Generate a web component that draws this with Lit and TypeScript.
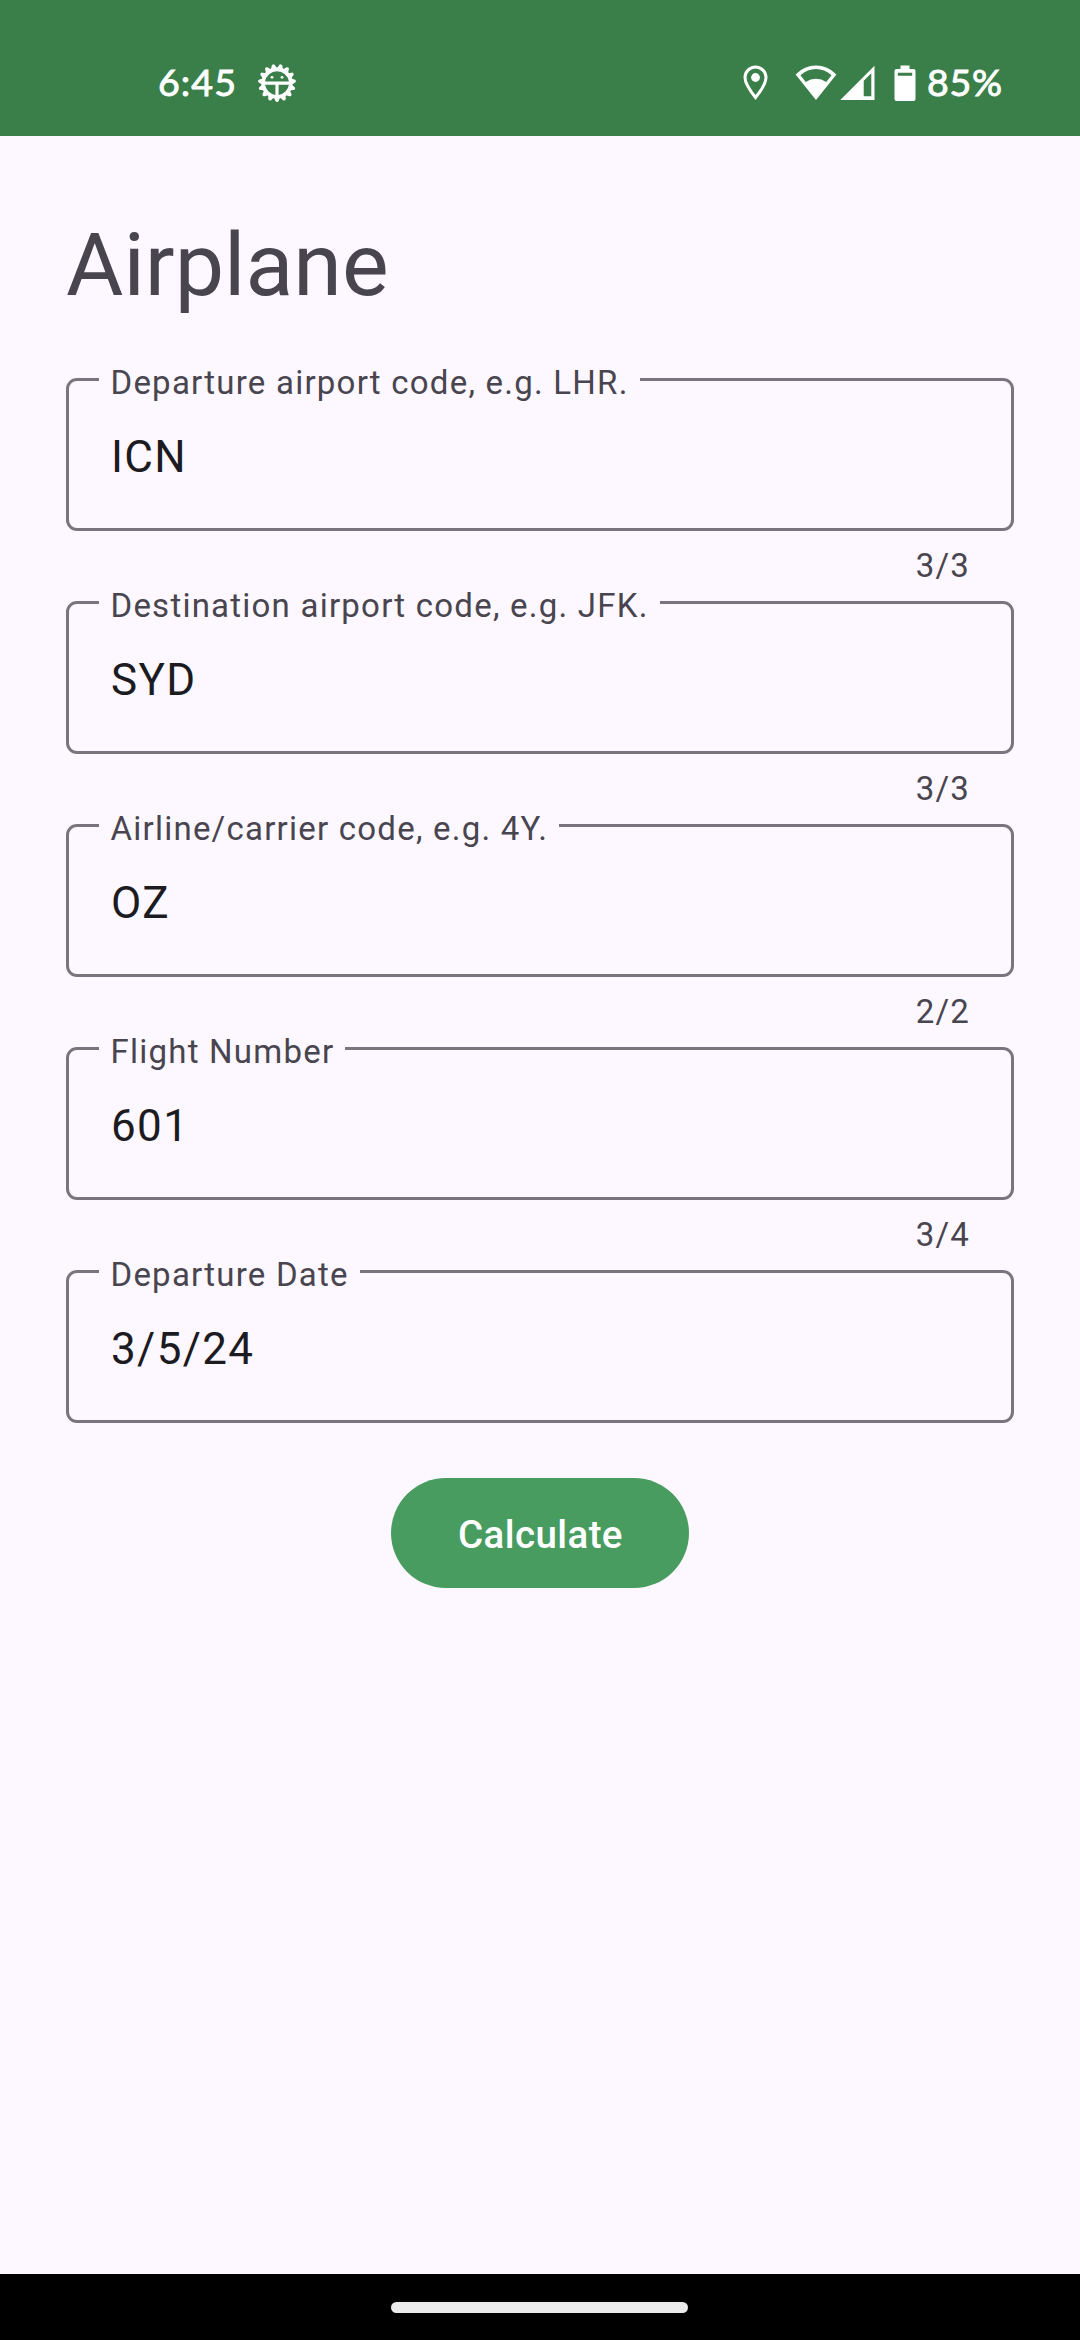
import { LitElement, html, css, svg, nothing } from "lit";
import { customElement, property } from "lit/decorators.js";

const TEETH = Array.from({ length: 15 }, (_, i) => i * 24);

@customElement("status-bar")
class StatusBar extends LitElement {
  static styles = css`
    :host {
      display: flex;
      box-sizing: border-box;
      width: 100%;
      height: 136px;
      padding: 60px 77px 30px 158px;
      align-items: center;
      justify-content: space-between;
      background: #3a7f49;
      color: #fff;
    }
    .group { display: flex; align-items: center; height: 46px; }
    .text {
      padding-bottom: 2px;
      font-family: Lato, "Noto Sans", sans-serif;
      font-size: 37.5px;
      line-height: 46px;
      font-weight: 400;
      letter-spacing: 0.7px;
      -webkit-text-stroke: 0.9px #fff;
      white-space: pre;
    }
    svg { display: block; flex: none; fill: #fff; }
    .time { width: 80px; letter-spacing: 1.1px; }
    .gear { margin-left: 18.5px; }
    .wifi { margin-left: 27px; }
    .signal { margin-left: 3px; }
    .battery { margin-left: 19px; }
    .percent { width: 76px; margin-left: 11px; }
  `;
  render() {
    return html`
      <div class="group">
        <span class="text time">6:45</span>
        <svg class="gear" width="40" height="40" viewBox="-20 -20 40 40">
          ${TEETH.map((a) => svg`<path transform="rotate(${a})" d="M-3 14.5L-1.7 17.8A1.8 1.8 0 0 0 1.7 17.8L3 14.5Z"></path>`)}
          <path fill-rule="evenodd" d="M0-15.7A15.7 15.7 0 1 1 0 15.7A15.7 15.7 0 1 1 0-15.7ZM-11.9-1.4H11.9A12 12 0 0 0-11.9-1.4ZM-11.9 1.7A12 12 0 0 0-1.6 11.9V1.7ZM11.9 1.7A12 12 0 0 1 1.6 11.9V1.7Z"></path>
          <circle cx="-5" cy="-5.7" r="1.4"></circle>
          <circle cx="5" cy="-5.7" r="1.4"></circle>
        </svg>
      </div>
      <div class="group">
        <svg width="25" height="36" viewBox="0 0 25 36">
          <path fill="none" stroke="#fff" stroke-width="3" d="M12.5 32.5C6.5 25 2 18.6 2 12.5A10.5 10.5 0 0 1 23 12.5C23 18.6 18.5 25 12.5 32.5Z"></path>
          <circle cx="12.5" cy="12.5" r="4.4"></circle>
        </svg>
        <svg class="wifi" width="42" height="36" viewBox="0 0 42 36">
          <path fill-rule="evenodd" d="M21 35L.6 9.4Q9.5 .6 21 .6T41.4 9.4ZM10.8 17.1Q15.5 13.8 21 13.8T31.2 17.1L36.6 10.2Q29.5 4.1 21 4.1T5.4 10.2Z"></path>
        </svg>
        <svg class="signal" width="35" height="36" viewBox="0 0 35 36">
          <path fill-rule="evenodd" d="M.3 35L34.5 .8V35ZM23.7 15.7V31.2H31.3V8.2Z"></path>
        </svg>
        <svg class="battery" width="22" height="36" viewBox="0 0 22 36">
          <path fill-rule="evenodd" d="M6.5 4V.6H15.5V4H19.5Q21.5 4 21.5 6V34Q21.5 36 19.5 36H2.5Q.5 36 .5 34V6Q.5 4 2.5 4ZM3.8 7.8V10.8H18.2V7.8Z"></path>
        </svg>
        <span class="text percent">85%</span>
      </div>
    `;
  }
}

@customElement("outlined-field")
class OutlinedField extends LitElement {
  @property() label = "";
  @property() value = "";
  @property() counter = "";

  static styles = css`
    :host { display: block; height: 223px; }
    .box {
      position: relative;
      box-sizing: border-box;
      height: 153px;
      padding: 51px 42px 0;
      border: 3px solid #79747e;
      border-radius: 11px;
    }
    .label {
      position: absolute;
      top: -18px;
      left: 30px;
      padding: 0 11px 0 11.5px;
      background: #fdf8ff;
      color: #49454f;
      font-size: 33px;
      line-height: 40px;
      letter-spacing: 1.23px;
      white-space: nowrap;
    }
    .value {
      color: #1c1b1f;
      font-size: 44px;
      line-height: 50px;
      letter-spacing: 1.375px;
    }
    .counter {
      padding: 15px 44px 0 0;
      color: #49454f;
      font-size: 33px;
      line-height: 40px;
      letter-spacing: 1.2px;
      text-align: right;
    }
  `;
  render() {
    return html`
      <div class="box">
        <span class="label">${this.label}</span>
        <div class="value">${this.value}</div>
      </div>
      ${this.counter ? html`<div class="counter">${this.counter}</div>` : nothing}
    `;
  }
}

@customElement("app-root")
class AppRoot extends LitElement {
  static styles = css`
    :host {
      display: flex;
      flex-direction: column;
      width: 1080px;
      height: 2340px;
      background: #fdf8ff;
      font-family: Roboto, "Noto Sans", sans-serif;
    }
    main {
      flex: 1;
      display: flex;
      flex-direction: column;
      padding: 77px 66px 0;
    }
    h1 {
      margin: 0 0 61px;
      color: #49454f;
      font-size: 88px;
      line-height: 104px;
      font-weight: 400;
    }
    .submit {
      align-self: center;
      box-sizing: border-box;
      width: 298px;
      height: 110px;
      margin-top: -15px;
      padding: 3px 0 0 1px;
      border: 0;
      border-radius: 55px;
      background: #489c5f;
      color: #fff;
      font-family: inherit;
      font-size: 38.5px;
      font-weight: 500;
      letter-spacing: 0.4px;
    }
    .nav {
      display: flex;
      justify-content: center;
      height: 66px;
      background: #000;
    }
    .handle {
      width: 297px;
      height: 11px;
      margin: 27.5px 1px 0 0;
      border-radius: 6px;
      background: #ebebeb;
    }
  `;
  render() {
    return html`
      <status-bar></status-bar>
      <main>
        <h1>Airplane</h1>
        <outlined-field label="Departure airport code, e.g. LHR." value="ICN" counter="3/3"></outlined-field>
        <outlined-field label="Destination airport code, e.g. JFK." value="SYD" counter="3/3"></outlined-field>
        <outlined-field label="Airline/carrier code, e.g. 4Y." value="OZ" counter="2/2"></outlined-field>
        <outlined-field label="Flight Number" value="601" counter="3/4"></outlined-field>
        <outlined-field label="Departure Date" value="3/5/24"></outlined-field>
        <button class="submit">Calculate</button>
      </main>
      <div class="nav"><div class="handle"></div></div>
    `;
  }
}
